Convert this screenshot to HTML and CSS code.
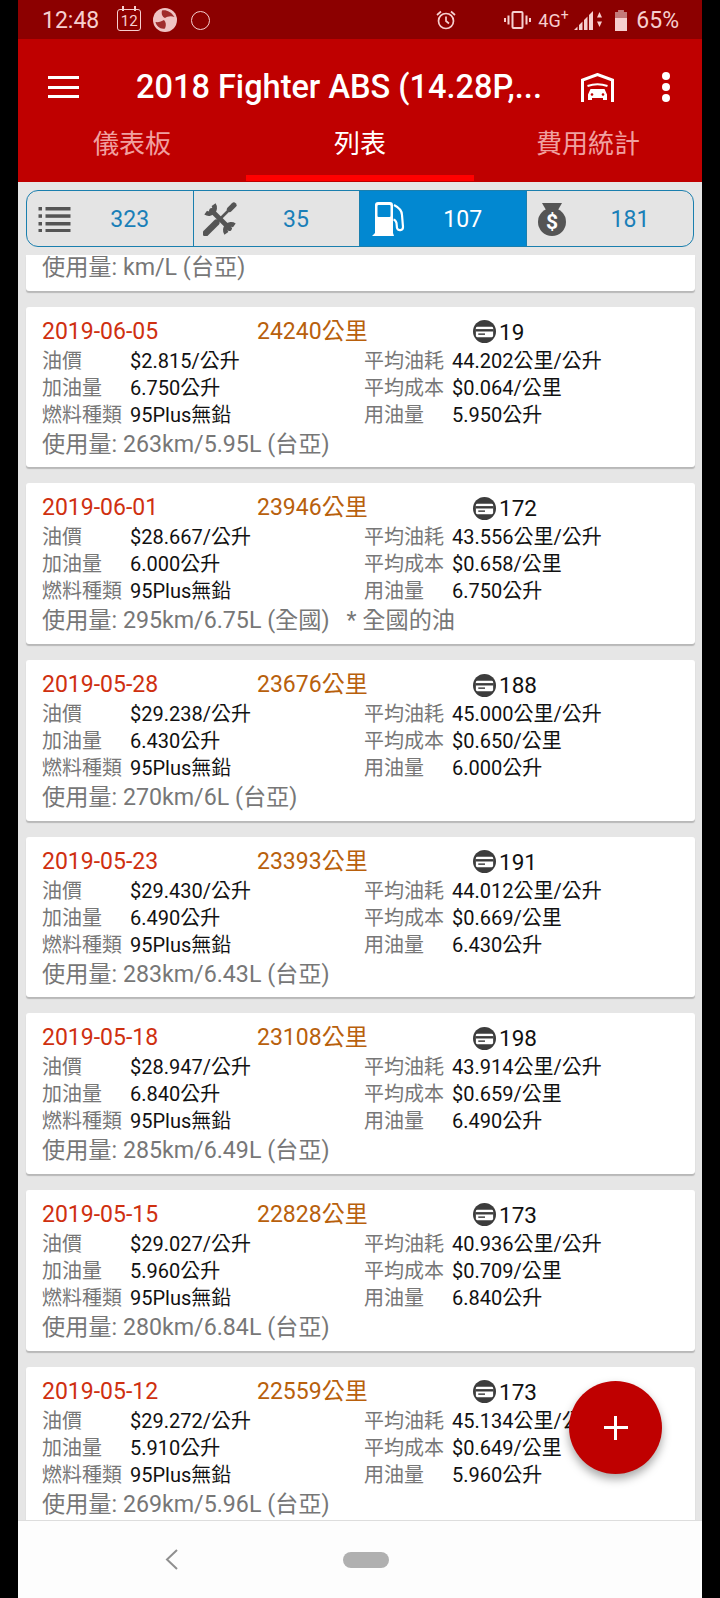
FILE: index.html
```html
<!DOCTYPE html>
<html lang="zh-Hant">
<head>
    <meta charset="UTF-8">
    <meta name="viewport" content="width=device-width, initial-scale=1.0">
    <title>2018 Fighter ABS</title>
    <link rel="stylesheet" href="styles.css">
</head>
<body>
<div class="phone">

    <!-- Status bar -->
    <div class="status">
        <span class="status-time">12:48</span>
        <span class="cal-icon">12</span>
        <svg class="ball-icon" viewBox="0 0 24 24"><circle cx="12" cy="12" r="12" fill="#f0c4c4"/><path d="M9 2.500c4-1 9 1 12.500 6.500-4-1.500-7-.5-9.500 1-2.500-1-4-4-3-7.500zM2.500 14c3 .5 6-.5 8.500-2 2 2 2.500 5 1 8.500-4.500 1-8.500-2-9.500-6.500z" fill="#a02c2c"/></svg>
        <span class="ring-icon"></span>
        <svg class="alarm-icon" viewBox="0 0 20 20" fill="none" stroke="#f6cfcf" stroke-width="1.700"><circle cx="10" cy="11" r="7.500"/><path d="M10 6.500V11l3 2.500M1 5l4-3.500M19 5l-4-3.500"/></svg>
        <svg class="vib-icon" viewBox="0 0 27 18" fill="none" stroke="#f6cfcf" stroke-width="2"><rect x="8.500" y="1" width="10" height="16" rx="1"/><path d="M4.500 4.500v9M1 7v4M22.500 4.500v9M26 7v4"/></svg>
        <span class="net-text">4G<sup>+</sup></span>
        <svg class="signal-icon" viewBox="0 0 28 20" fill="#f6cfcf"><path d="M0 20l3.500-3.500V20zM5 15l3.500-3.500V20H5zM10 10l3.500-3.500V20H10zM15 5l4-4v19h-4z"/><path d="M23 7.500h5l-2.500-5.500zM23 11.500h5l-2.500 5.500z"/></svg>
        <svg class="batt-icon" viewBox="0 0 12 21"><path d="M3.500 0h5v2H12v19H0V2h3.500z" fill="#f6cfcf"/><path d="M3.500 0h5v2H12v6H0V2h3.500z" fill="#c47a7a"/></svg>
        <span class="status-pct">65%</span>
    </div>

    <!-- App bar -->
    <div class="appbar">
        <div class="toolbar">
            <div class="menu-btn"><span></span><span></span><span></span></div>
            <div class="title">2018 Fighter ABS (14.28P,...</div>
            <svg class="garage-icon" viewBox="0 0 33 29"><path d="M1.500 29V7L16.500 1.500l15 5.500V29" fill="none" stroke="#fff" stroke-width="3"/><path d="M6.500 13q10-3.500 20 0" fill="none" stroke="#fff" stroke-width="2"/><path d="M9.500 16h14l2.500 5.500V27h-4v-2h-11v2H7v-5.500z" fill="#fff"/><circle cx="11" cy="21.500" r="1.300" fill="#bf0000"/><circle cx="22" cy="21.500" r="1.300" fill="#bf0000"/></svg>
            <div class="more-btn"><span></span><span></span><span></span></div>
        </div>
        <div class="tabs">
            <div class="tab">儀表板</div>
            <div class="tab active">列表</div>
            <div class="tab">費用統計</div>
        </div>
    </div>

    <!-- Content -->
    <div class="content">
        <div class="segments">
            <div class="seg">
                <svg class="seg-icon" viewBox="1.500 0 34 26" fill="#555"><rect x="2" y="1" width="3.500" height="3.500"/><rect x="9" y="1" width="25" height="3.500"/><rect x="2" y="8.300" width="3.500" height="3.500"/><rect x="9" y="8.300" width="25" height="3.500"/><rect x="2" y="16" width="3.500" height="3.500"/><rect x="9" y="16" width="25" height="3.500"/><rect x="2" y="23" width="3.500" height="3"/><rect x="9" y="23" width="25" height="3"/></svg>
                <span class="seg-num">323</span>
            </div>
            <div class="seg">
                <svg class="seg-icon tall tools" viewBox="1 1 32 32" fill="none" stroke="#555" stroke-linecap="round"><path d="M9 9l17 17" stroke-width="4.500"/><path d="M11 3.500A5.400 5.400 0 0 1 3.500 11M23 30.500A5.400 5.400 0 0 1 30.500 23" stroke-width="4.500" stroke-linecap="butt"/><path d="M3.500 30.500l10-10" stroke-width="6"/><path d="M13 21l12-12" stroke-width="2.500"/><path d="M26 8l4-4" stroke-width="5"/></svg>
                <span class="seg-num">35</span>
            </div>
            <div class="seg selected">
                <svg class="seg-icon tall" viewBox="0 0 34 34"><path d="M4 3a3 3 0 0 1 3-3h12a3 3 0 0 1 3 3v28l1 3H1l3-3z" fill="#fff"/><rect x="6.500" y="3" width="13" height="12" rx="1" fill="#0288d1"/><path d="M23 3c4 2 8 5 8 10l1 12c0 4-5 4-6 1l-.5-5c-.5-2-1-3-3-3.500" fill="none" stroke="#fff" stroke-width="2.200"/></svg>
                <span class="seg-num">107</span>
            </div>
            <div class="seg">
                <svg class="seg-icon tall" viewBox="0 0 34 34"><path d="M4 1h20l-4 7H8z" fill="#555"/><circle cx="14" cy="20" r="14" fill="#555"/><text x="14" y="27" class="bag-sign">$</text></svg>
                <span class="seg-num">181</span>
            </div>
        </div>

        <div class="card cut">
            <div class="usage">使用量: km/L (台亞)</div>
        </div>

        <div class="card">
            <div class="card-head">
                <span class="date">2019-06-05</span>
                <span class="odo">24240公里</span>
                <span class="tank"><svg class="card-icon" viewBox="0 0 24 24"><circle cx="12" cy="12" r="12" fill="#3c3c3c"/><rect x="3" y="7" width="18" height="11" rx="1.500" fill="#fff"/><rect x="3" y="9.500" width="18" height="2.500" fill="#3c3c3c"/><rect x="5.500" y="14" width="7" height="1.500" fill="#3c3c3c"/></svg>19</span>
            </div>
            <div class="rows">
                <span class="k">油價</span><span class="v">$2.815/公升</span><span class="k">平均油耗</span><span class="v">44.202公里/公升</span>
                <span class="k">加油量</span><span class="v">6.750公升</span><span class="k">平均成本</span><span class="v">$0.064/公里</span>
                <span class="k">燃料種類</span><span class="v">95Plus無鉛</span><span class="k">用油量</span><span class="v">5.950公升</span>
            </div>
            <div class="usage">使用量: 263km/5.95L (台亞)</div>
        </div>

        <div class="card">
            <div class="card-head">
                <span class="date">2019-06-01</span>
                <span class="odo">23946公里</span>
                <span class="tank"><svg class="card-icon" viewBox="0 0 24 24"><circle cx="12" cy="12" r="12" fill="#3c3c3c"/><rect x="3" y="7" width="18" height="11" rx="1.500" fill="#fff"/><rect x="3" y="9.500" width="18" height="2.500" fill="#3c3c3c"/><rect x="5.500" y="14" width="7" height="1.500" fill="#3c3c3c"/></svg>172</span>
            </div>
            <div class="rows">
                <span class="k">油價</span><span class="v">$28.667/公升</span><span class="k">平均油耗</span><span class="v">43.556公里/公升</span>
                <span class="k">加油量</span><span class="v">6.000公升</span><span class="k">平均成本</span><span class="v">$0.658/公里</span>
                <span class="k">燃料種類</span><span class="v">95Plus無鉛</span><span class="k">用油量</span><span class="v">6.750公升</span>
            </div>
            <div class="usage">使用量: 295km/6.75L (全國)<span class="note">* 全國的油</span></div>
        </div>

        <div class="card">
            <div class="card-head">
                <span class="date">2019-05-28</span>
                <span class="odo">23676公里</span>
                <span class="tank"><svg class="card-icon" viewBox="0 0 24 24"><circle cx="12" cy="12" r="12" fill="#3c3c3c"/><rect x="3" y="7" width="18" height="11" rx="1.500" fill="#fff"/><rect x="3" y="9.500" width="18" height="2.500" fill="#3c3c3c"/><rect x="5.500" y="14" width="7" height="1.500" fill="#3c3c3c"/></svg>188</span>
            </div>
            <div class="rows">
                <span class="k">油價</span><span class="v">$29.238/公升</span><span class="k">平均油耗</span><span class="v">45.000公里/公升</span>
                <span class="k">加油量</span><span class="v">6.430公升</span><span class="k">平均成本</span><span class="v">$0.650/公里</span>
                <span class="k">燃料種類</span><span class="v">95Plus無鉛</span><span class="k">用油量</span><span class="v">6.000公升</span>
            </div>
            <div class="usage">使用量: 270km/6L (台亞)</div>
        </div>

        <div class="card">
            <div class="card-head">
                <span class="date">2019-05-23</span>
                <span class="odo">23393公里</span>
                <span class="tank"><svg class="card-icon" viewBox="0 0 24 24"><circle cx="12" cy="12" r="12" fill="#3c3c3c"/><rect x="3" y="7" width="18" height="11" rx="1.500" fill="#fff"/><rect x="3" y="9.500" width="18" height="2.500" fill="#3c3c3c"/><rect x="5.500" y="14" width="7" height="1.500" fill="#3c3c3c"/></svg>191</span>
            </div>
            <div class="rows">
                <span class="k">油價</span><span class="v">$29.430/公升</span><span class="k">平均油耗</span><span class="v">44.012公里/公升</span>
                <span class="k">加油量</span><span class="v">6.490公升</span><span class="k">平均成本</span><span class="v">$0.669/公里</span>
                <span class="k">燃料種類</span><span class="v">95Plus無鉛</span><span class="k">用油量</span><span class="v">6.430公升</span>
            </div>
            <div class="usage">使用量: 283km/6.43L (台亞)</div>
        </div>

        <div class="card">
            <div class="card-head">
                <span class="date">2019-05-18</span>
                <span class="odo">23108公里</span>
                <span class="tank"><svg class="card-icon" viewBox="0 0 24 24"><circle cx="12" cy="12" r="12" fill="#3c3c3c"/><rect x="3" y="7" width="18" height="11" rx="1.500" fill="#fff"/><rect x="3" y="9.500" width="18" height="2.500" fill="#3c3c3c"/><rect x="5.500" y="14" width="7" height="1.500" fill="#3c3c3c"/></svg>198</span>
            </div>
            <div class="rows">
                <span class="k">油價</span><span class="v">$28.947/公升</span><span class="k">平均油耗</span><span class="v">43.914公里/公升</span>
                <span class="k">加油量</span><span class="v">6.840公升</span><span class="k">平均成本</span><span class="v">$0.659/公里</span>
                <span class="k">燃料種類</span><span class="v">95Plus無鉛</span><span class="k">用油量</span><span class="v">6.490公升</span>
            </div>
            <div class="usage">使用量: 285km/6.49L (台亞)</div>
        </div>

        <div class="card">
            <div class="card-head">
                <span class="date">2019-05-15</span>
                <span class="odo">22828公里</span>
                <span class="tank"><svg class="card-icon" viewBox="0 0 24 24"><circle cx="12" cy="12" r="12" fill="#3c3c3c"/><rect x="3" y="7" width="18" height="11" rx="1.500" fill="#fff"/><rect x="3" y="9.500" width="18" height="2.500" fill="#3c3c3c"/><rect x="5.500" y="14" width="7" height="1.500" fill="#3c3c3c"/></svg>173</span>
            </div>
            <div class="rows">
                <span class="k">油價</span><span class="v">$29.027/公升</span><span class="k">平均油耗</span><span class="v">40.936公里/公升</span>
                <span class="k">加油量</span><span class="v">5.960公升</span><span class="k">平均成本</span><span class="v">$0.709/公里</span>
                <span class="k">燃料種類</span><span class="v">95Plus無鉛</span><span class="k">用油量</span><span class="v">6.840公升</span>
            </div>
            <div class="usage">使用量: 280km/6.84L (台亞)</div>
        </div>

        <div class="card">
            <div class="card-head">
                <span class="date">2019-05-12</span>
                <span class="odo">22559公里</span>
                <span class="tank"><svg class="card-icon" viewBox="0 0 24 24"><circle cx="12" cy="12" r="12" fill="#3c3c3c"/><rect x="3" y="7" width="18" height="11" rx="1.500" fill="#fff"/><rect x="3" y="9.500" width="18" height="2.500" fill="#3c3c3c"/><rect x="5.500" y="14" width="7" height="1.500" fill="#3c3c3c"/></svg>173</span>
            </div>
            <div class="rows">
                <span class="k">油價</span><span class="v">$29.272/公升</span><span class="k">平均油耗</span><span class="v">45.134公里/公升</span>
                <span class="k">加油量</span><span class="v">5.910公升</span><span class="k">平均成本</span><span class="v">$0.649/公里</span>
                <span class="k">燃料種類</span><span class="v">95Plus無鉛</span><span class="k">用油量</span><span class="v">5.960公升</span>
            </div>
            <div class="usage">使用量: 269km/5.96L (台亞)</div>
        </div>

        <!-- Add button -->
        <div class="fab"><span></span></div>
    </div>

    <!-- Navigation bar -->
    <div class="navbar">
        <svg class="nav-back" viewBox="0 0 13 21" fill="none" stroke="#8f8f8f" stroke-width="2"><path d="M12 1L2 10.500 12 20"/></svg>
        <span class="nav-pill"></span>
    </div>
</div>
</body>
</html>
```

FILE: styles.css
```css
/* General */
body {
    margin: 0;
    background: #000;
    font-family: Roboto, "Noto Sans CJK TC", sans-serif;
}

.phone {
    width: 684px;
    height: 1598px;
    margin-left: 18px;
    display: flex;
    flex-direction: column;
    overflow: hidden;
}

/* Status bar */
.status {
    height: 39px;
    flex-shrink: 0;
    box-sizing: border-box;
    display: flex;
    align-items: center;
    padding: 1px 23px 0 24px;
    background: #8c0000;
    color: #f6cfcf;
    font-size: 23px;
}

.cal-icon {
    position: relative;
    width: 22px;
    height: 18px;
    margin-left: 18px;
    padding-top: 2px;
    border: 1.5px solid #f6cfcf;
    border-radius: 3px;
    font-size: 15px;
    line-height: 18px;
    text-align: center;
}

/* binder tabs on the calendar */
.cal-icon::before,
.cal-icon::after {
    content: "";
    position: absolute;
    top: -4px;
    width: 2px;
    height: 5px;
    background: #f6cfcf;
}

.cal-icon::before {
    left: 4px;
}

.cal-icon::after {
    right: 4px;
}

.ball-icon {
    width: 24px;
    height: 24px;
    margin-left: 12px;
}

.ring-icon {
    width: 17px;
    height: 17px;
    margin-left: 14px;
    border: 1.5px solid #f6cfcf;
    border-radius: 50%;
}

.alarm-icon {
    width: 20px;
    height: 20px;
    margin-left: auto;
}

.vib-icon {
    width: 27px;
    height: 18px;
    margin-left: 48px;
}

.net-text {
    margin-left: 7px;
    font-size: 18px;
    width: 31px;
}

.net-text sup {
    font-size: 14px;
    line-height: 0;
}

.signal-icon {
    width: 28px;
    height: 20px;
    margin-left: 5px;
}

.batt-icon {
    width: 12px;
    height: 21px;
    margin-left: 13px;
}

.status-pct {
    margin-left: 9px;
}

/* App bar */
.appbar {
    flex-shrink: 0;
    background: #bf0000;
    padding-bottom: 1px;
}

.toolbar {
    height: 96px;
    display: flex;
    align-items: center;
    color: #fff;
}

.menu-btn {
    width: 31px;
    margin-left: 30px;
    display: flex;
    flex-direction: column;
    gap: 6.5px;
}

.menu-btn span {
    height: 3px;
    background: #fff;
}

.title {
    margin-left: 57px;
    width: 438px;
    font-size: 32.5px;
    font-weight: 500;
    white-space: nowrap;
}

.garage-icon {
    width: 33px;
    height: 29px;
    margin-left: 7px;
}

.more-btn {
    margin-left: 48px;
    display: flex;
    flex-direction: column;
    gap: 3px;
}

.more-btn span {
    width: 8px;
    height: 8px;
    border-radius: 50%;
    background: #fff;
}

.tabs {
    display: grid;
    grid-template-columns: repeat(3, 1fr);
}

.tab {
    height: 40px;
    padding-bottom: 6px;
    text-align: center;
    font-size: 26px;
    line-height: 18px;
    color: #f0a0a0;
}

.tab.active {
    color: #fff;
    border-bottom: 6px solid #f00;
    padding-bottom: 0;
}

/* Content */
.content {
    flex: 1;
    position: relative;
    overflow: hidden;
    padding: 8px 7px 0 8px;
    background: #e6e6e6;
    display: flex;
    flex-direction: column;
}

.segments {
    height: 57px;
    flex-shrink: 0;
    box-sizing: border-box;
    margin-right: 1px;
    display: grid;
    grid-template-columns: 165.5px 166px 167.5px 1fr;
    background: #e4e4e4;
    border: 1.5px solid #1a7fae;
    border-radius: 12px;
    overflow: hidden;
}

.seg {
    display: flex;
    align-items: center;
    padding: 0 5px 0 11px;
    border-left: 1.5px solid #1a7fae;
}

.seg:first-child {
    border-left: none;
}

.seg.selected {
    background: #0288d1;
}

.seg-icon {
    width: 34px;
    height: 26px;
    flex-shrink: 0;
}

.seg-icon.tall {
    height: 34px;
}

.seg-icon.tools {
    margin: 0 2px 0 -2px;
}

.bag-sign {
    font-size: 21px;
    font-weight: 700;
    fill: #fff;
    text-anchor: middle;
}

.seg-num {
    flex: 1;
    padding-top: 2px;
    text-align: center;
    font-size: 23px;
    color: #1a7fb8;
}

.seg.selected .seg-num {
    color: #fff;
}

/* Cards */
.card {
    height: 160.67px;
    flex-shrink: 0;
    box-sizing: border-box;
    margin-top: 16px;
    padding: 10px 0 0 16px;
    background: #fff;
    border-radius: 3px;
    box-shadow: 0 2px 1px #b8b8b8;
}

.card.cut {
    height: 35.7px;
    margin-top: 8px;
    padding-top: 0;
    border-radius: 0 0 3px 3px;
    overflow: hidden;
}

.card.cut .usage {
    margin-top: -3px;
}

.card-head {
    display: grid;
    grid-template-columns: 215px 216px 1fr;
    height: 30px;
    align-items: baseline;
    line-height: 30px;
    font-size: 23px;
}

.date {
    color: #cf3010;
}

.odo {
    color: #b8600c;
}

.tank {
    display: flex;
    align-items: center;
    align-self: center;
    gap: 3px;
    font-size: 22.5px;
    color: #111;
}

.card-icon {
    width: 23px;
    height: 23px;
}

.rows {
    display: grid;
    grid-template-columns: 88px 234px 88px 1fr;
    grid-auto-rows: 27px;
    align-items: center;
    margin-top: -1px;
    font-size: 20px;
}

.k {
    color: #777;
    white-space: nowrap;
}

.v {
    color: #111;
    white-space: nowrap;
}

.usage {
    height: 30px;
    margin-top: 2px;
    line-height: 30px;
    font-size: 23.2px;
    color: #777;
    white-space: nowrap;
}

.note {
    margin-left: 17px;
}

/* Floating add button */
.fab {
    position: absolute;
    right: 40px;
    bottom: 46px;
    width: 93px;
    height: 93px;
    border-radius: 50%;
    background: #bf0000;
    box-shadow: 0 5px 10px rgba(0, 0, 0, 0.35);
    display: flex;
    align-items: center;
    justify-content: center;
}

.fab span {
    width: 24px;
    height: 24px;
    background:
        linear-gradient(#fff, #fff) center / 100% 3px no-repeat,
        linear-gradient(#fff, #fff) center / 3px 100% no-repeat;
}

/* Navigation bar */
.navbar {
    height: 78px;
    flex-shrink: 0;
    box-sizing: border-box;
    display: flex;
    align-items: center;
    padding-left: 147px;
    background: #fdfdfd;
    border-top: 1px solid #ddd;
}

.nav-back {
    width: 13px;
    height: 21px;
}

.nav-pill {
    width: 46px;
    height: 16px;
    margin-left: 165px;
    border-radius: 8px;
    background: #b0b0b0;
}
```
